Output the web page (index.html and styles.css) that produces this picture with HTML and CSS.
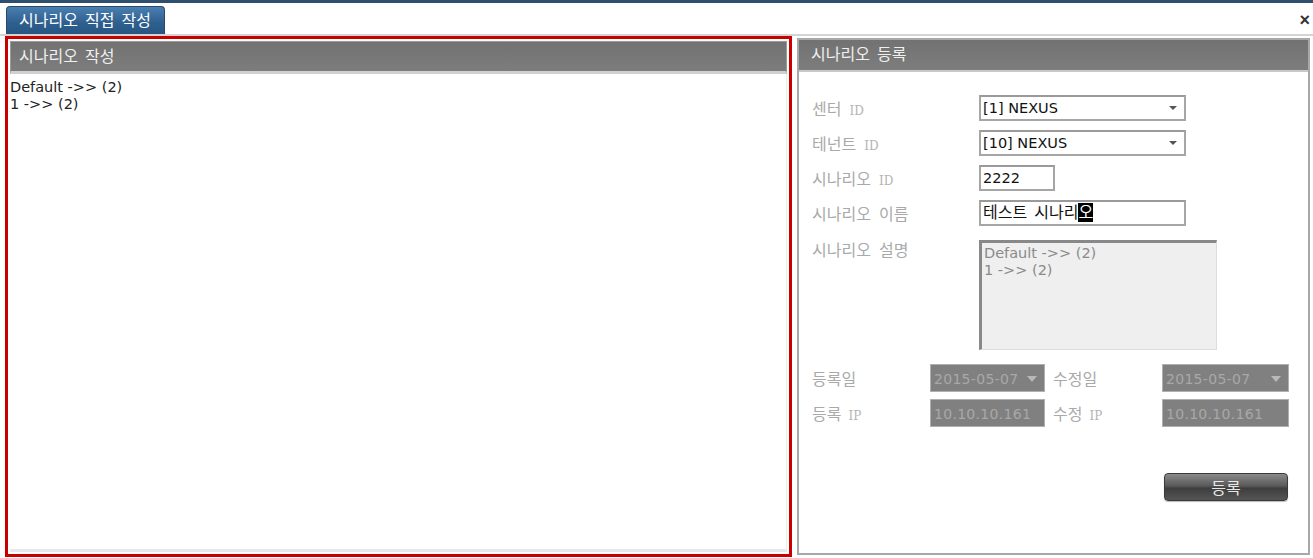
FILE: index.html
```html
<!DOCTYPE html>
<html lang="ko">
<head>
  <meta charset="UTF-8" />
  <title>시나리오 직접 작성</title>
  <link rel="stylesheet" href="styles.css">
</head>
<body>
  <div class="topline"></div>
  <div class="tabbar">
    <div class="tab">시나리오 직접 작성</div>
    <span class="close">&times;</span>
  </div>

  <div class="main">
    <div class="panel left-panel">
      <div class="panel-head">시나리오 작성</div>
      <div class="tree">
        <p>Default -&gt;&gt; (2)</p>
        <p>1 -&gt;&gt; (2)</p>
      </div>
    </div>

    <div class="panel right-panel">
      <div class="panel-head">시나리오 등록</div>
      <div class="form">
        <div class="row">
          <label>센터 <span class="en">ID</span></label>
          <div class="select wide">[1] NEXUS <span class="caret"></span></div>
        </div>
        <div class="row">
          <label>테넌트 <span class="en">ID</span></label>
          <div class="select wide">[10] NEXUS <span class="caret"></span></div>
        </div>
        <div class="row">
          <label>시나리오 <span class="en">ID</span></label>
          <div class="input short">2222</div>
        </div>
        <div class="row">
          <label>시나리오 이름</label>
          <div class="input wide">테스트 시나리<span class="sel">오</span></div>
        </div>
        <div class="row tall">
          <label>시나리오 설명</label>
          <div class="textarea">Default -&gt;&gt; (2)<br>1 -&gt;&gt; (2)</div>
        </div>

        <div class="dates">
          <label>등록일</label>
          <div class="dis">2015-05-07 <span class="caret light"></span></div>
          <label>수정일</label>
          <div class="dis">2015-05-07 <span class="caret light"></span></div>
          <label>등록 <span class="en">IP</span></label>
          <div class="dis">10.10.10.161</div>
          <label>수정 <span class="en">IP</span></label>
          <div class="dis">10.10.10.161</div>
        </div>

        <div class="actions">
          <button class="btn">등록</button>
        </div>
      </div>
    </div>
  </div>
</body>
</html>
```

FILE: styles.css
```css
body {
  margin: 0;
  background: #fff;
  font-family: "DejaVu Sans", "Noto Sans CJK KR", sans-serif;
  font-size: 14.5px;
  color: #222;
  width: 1313px;
  height: 558px;
  overflow: hidden;
}

.topline {
  height: 3px;
  background: #2f4f6f;
}

.tabbar {
  height: 31px;
  display: flex;
  align-items: flex-end;
  justify-content: space-between;
  padding: 0 3px 0 6px;
  border-bottom: 2px solid #d4d4d4;
}

.tab {
  width: 159px;
  height: 28px;
  line-height: 28px;
  box-sizing: border-box;
  padding-left: 12px;
  color: #fff;
  font-size: 16px;
  word-spacing: 2px;
  border-radius: 4px 4px 0 0;
  background: linear-gradient(#4a7fb0, #2d5f8e 60%, #285682);
  border: 1px solid #27496b;
  border-bottom: none;
}

.close {
  align-self: center;
  font-family: "Liberation Sans", sans-serif;
  font-size: 18px;
  font-weight: bold;
  color: #333;
  margin-top: 4px;
}

.main {
  display: flex;
  gap: 5px;
  padding: 0 3px 0 5px;
  height: 521px;
}

.panel {
  box-sizing: border-box;
  display: flex;
  flex-direction: column;
}

.left-panel {
  width: 787px;
  border: 3px solid #c80000;
  padding: 2px;
}

.right-panel {
  flex: 1;
  margin-top: 2px;
  height: 517px;
  border: 2px solid #a8a8a8;
}

.panel-head {
  height: 30px;
  line-height: 30px;
  box-sizing: border-box;
  padding-left: 8px;
  font-size: 16px;
  word-spacing: 2px;
  color: #f0f0f0;
  background: linear-gradient(#727272, #7d7d7d);
  border: 1px solid #9a9a9a;
  border-bottom: 3px solid #d0d0d0;
  flex: none;
}

.left-panel .panel-head {
  height: 33px;
}

.right-panel .panel-head {
  height: 32px;
  padding-left: 12px;
  border: none;
  border-bottom: 2px solid #c8c8c8;
}

.tree {
  flex: 1;
  padding: 5px 0 0 0;
  border-right: 1px solid #ececec;
  border-bottom: 3px solid #e8e8e8;
}

.tree p {
  margin: 0;
  line-height: 17px;
}

.form {
  padding: 23px 0 0 13px;
}

.row {
  display: flex;
  align-items: center;
  height: 26px;
  margin-bottom: 9px;
}

.row.tall {
  height: 110px;
  align-items: flex-start;
  margin-top: 14px;
}

.row label {
  width: 167px;
  flex: none;
  color: #a9a9a9;
  font-size: 16px;
  word-spacing: 3px;
}

.row.tall label {
  margin-top: -3px;
}

.en {
  font-family: "DejaVu Serif", serif;
  font-size: 12px;
  color: #b4b4b4;
  word-spacing: 0;
}

.select, .input {
  box-sizing: border-box;
  height: 26px;
  line-height: 22px;
  border: 2px solid #a6a6a6;
  border-top-color: #9a9a9a;
  padding-left: 2px;
  color: #111;
  position: relative;
  background: #fff;
}

.input.wide {
  font-size: 16px;
  word-spacing: 2px;
}

.wide {
  width: 207px;
}

.short {
  width: 76px;
}

.caret {
  position: absolute;
  right: 7px;
  top: 9px;
  width: 0;
  height: 0;
  border-left: 4px solid transparent;
  border-right: 4px solid transparent;
  border-top: 4px solid #555;
}

.caret.light {
  border-top-color: #b8b8b8;
  border-left-width: 5px;
  border-right-width: 5px;
  border-top-width: 6px;
  top: 11px;
}

.sel {
  background: #000;
  color: #fff;
}

.textarea {
  box-sizing: border-box;
  width: 238px;
  height: 110px;
  background: #efefef;
  border: 1px solid #ddd;
  border-top: 3px solid #888;
  border-left: 3px solid #888;
  padding: 2px 0 0 2px;
  color: #8a8a8a;
  line-height: 17px;
}

.dates {
  display: grid;
  grid-template-columns: 118px 115px 117px 127px;
  row-gap: 7px;
  align-items: center;
  margin-top: 14px;
}

.dates label {
  color: #a9a9a9;
  font-size: 16px;
  word-spacing: 2px;
}

.dates label:nth-child(4n+3) {
  padding-left: 8px;
}

.dis {
  position: relative;
  height: 28px;
  line-height: 28px;
  background: #808080;
  border: 1px solid #b0b0b0;
  box-sizing: border-box;
  color: #a8a8a8;
  font-size: 14px;
  padding-left: 3px;
  letter-spacing: 0.3px;
}

.actions {
  display: flex;
  justify-content: flex-end;
  padding-right: 20px;
  margin-top: 46px;
}

.btn {
  width: 124px;
  height: 28px;
  border: 1px solid #3a3a3a;
  border-radius: 4px;
  background: linear-gradient(#8a8a8a, #5a5a5a 45%, #3e3e3e 55%, #555);
  color: #e8e8e8;
  font-family: "Noto Sans CJK KR", sans-serif;
  font-size: 16px;
  box-shadow: 0 1px 1px #bbb;
}
```
